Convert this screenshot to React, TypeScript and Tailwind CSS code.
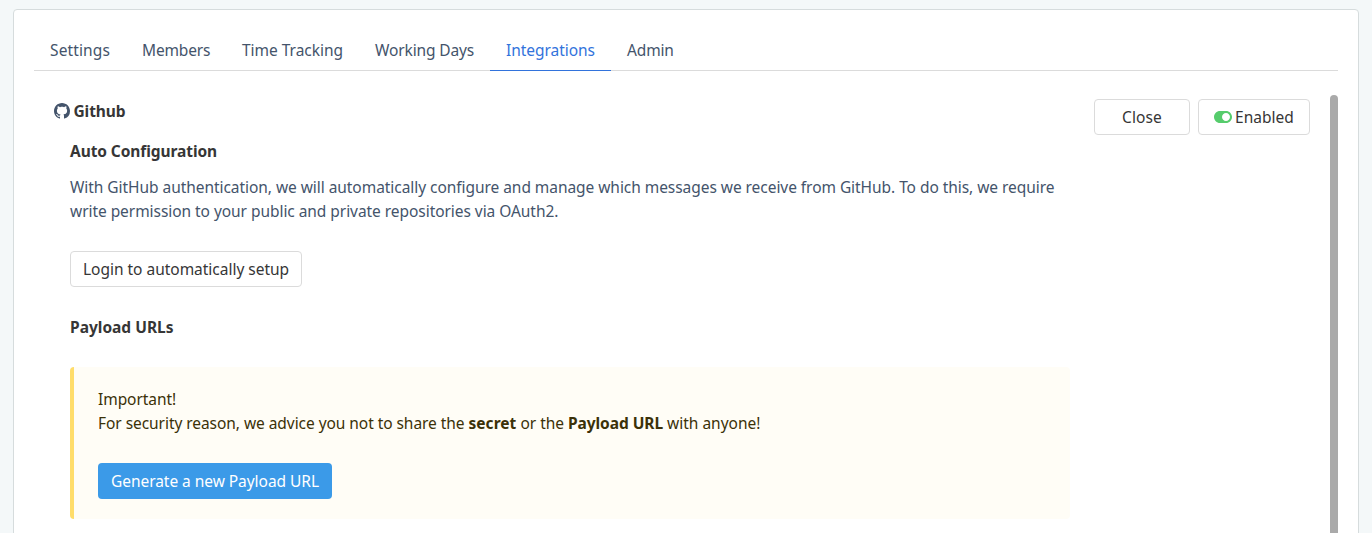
import { FaToggleOn } from "react-icons/fa";

const tabs = [
  { label: "Settings", width: "w-[92px]", tracking: "tracking-[0.12px]" },
  { label: "Members", width: "w-[100px]", tracking: "tracking-[-0.16px]" },
  { label: "Time Tracking", width: "w-[133px]", tracking: "tracking-[-0.02px]" },
  { label: "Working Days", width: "w-[131px]", tracking: "tracking-[-0.13px]" },
  { label: "Integrations", width: "w-[121px]", tracking: "tracking-[-0.04px]", active: true },
  { label: "Admin", width: "w-[79px]", tracking: "tracking-[-0.15px]" },
];

function GithubMark() {
  return (
    <svg className="size-4 shrink-0" viewBox="0 0 16 16" fill="currentColor" aria-hidden="true">
      <path d="M8 0C3.58 0 0 3.58 0 8c0 3.54 2.29 6.53 5.47 7.59.4.07.55-.17.55-.38 0-.19-.01-.82-.01-1.49-2.01.37-2.53-.49-2.69-.94-.09-.23-.48-.94-.82-1.13-.28-.15-.68-.52-.01-.53.63-.01 1.08.58 1.23.82.72 1.21 1.87.87 2.33.66.07-.52.28-.87.51-1.07-1.78-.2-3.64-.89-3.64-3.95 0-.87.31-1.59.82-2.15-.08-.2-.36-1.02.08-2.12 0 0 .67-.21 2.2.82.64-.18 1.32-.27 2-.27s1.36.09 2 .27c1.53-1.04 2.2-.82 2.2-.82.44 1.1.16 1.92.08 2.12.51.56.82 1.27.82 2.15 0 3.07-1.87 3.75-3.65 3.95.29.25.54.73.54 1.48 0 1.07-.01 1.93-.01 2.2 0 .21.15.46.55.38A8.01 8.01 0 0 0 16 8c0-4.42-3.58-8-8-8z" />
    </svg>
  );
}

function Tabs() {
  return (
    <nav className="flex border-b border-[#dbdbdb]">
      {tabs.map((tab) => (
        <a
          key={tab.label}
          className={`-mb-px shrink-0 border-b px-4 py-2 whitespace-nowrap ${tab.width} ${tab.tracking} ${
            tab.active ? "border-[#3273dc] text-[#3273dc]" : "border-transparent"
          }`}
        >
          {tab.label}
        </a>
      ))}
    </nav>
  );
}

function GithubSettings() {
  return (
    <section className="w-[1016px]">
      <h2 className="flex items-center gap-[3.5px]">
        <GithubMark />
        <strong className="tracking-[-0.1px] text-[#363636]">Github</strong>
      </h2>
      <div className="pt-4 pl-4">
        <h3 className="font-bold tracking-[-0.08px] text-[#363636]">Auto Configuration</h3>
        <p className="mt-3 tracking-[-0.052px] whitespace-nowrap">
          With GitHub authentication, we will automatically configure and manage which messages we receive from GitHub. To do this, we require
          <br />
          write permission to your public and private repositories via OAuth2.
        </p>
        <button className="mt-7 flex h-9 w-[232px] items-center rounded border border-[#dbdbdb] bg-white px-3 tracking-[-0.02px] whitespace-nowrap text-[#363636]">
          Login to automatically setup
        </button>
        <h3 className="mt-7 font-bold text-[#363636]">Payload URLs</h3>
        <div className="mt-7 rounded border-l-4 border-[#ffdd6b] bg-[#fffdf6] px-6 py-5 text-[#3b3108]">
          <p className="tracking-[-0.06px]">Important!</p>
          <p className="whitespace-pre">
            <span className="tracking-[-0.055px]">For security reason, we advice you not to share the </span>
            <strong className="tracking-[0.05px]">secret</strong>
            <span className="tracking-[-0.03px]"> or the </span>
            <strong className="tracking-[-0.06px]">Payload URL</strong>
            <span className="tracking-[-0.01px]"> with anyone!</span>
          </p>
          <button className="mt-7 flex h-9 w-[234px] items-center rounded bg-[#3b9ae8] px-[13px] tracking-[-0.045px] whitespace-nowrap text-white">
            Generate a new Payload URL
          </button>
        </div>
      </div>
    </section>
  );
}

export default function App() {
  return (
    <div className="h-screen overflow-hidden bg-[#f4f8f9] px-[13px] pt-[9px] font-['Noto_Sans','Open_Sans',sans-serif] text-[15.5px] leading-6 text-[#44546b]">
      <main className="flex h-[600px] flex-col rounded border border-[#d6dcdd] bg-white p-5">
        <Tabs />
        <div className="mt-6 flex flex-1">
          <div className="flex flex-1 items-start justify-between px-5 pt-1">
            <GithubSettings />
            <div className="flex gap-2 text-[#363636]">
              <button className="flex h-9 w-24 items-center justify-center rounded border border-[#dbdbdb] bg-white tracking-[0.1px]">
                Close
              </button>
              <button className="flex h-9 w-28 items-center rounded border border-[#dbdbdb] bg-white pl-[15px] tracking-[0.02px]">
                <FaToggleOn className="mr-[3px] h-4 w-[18px] text-[#56cc6c]" />
                Enabled
              </button>
            </div>
          </div>
          <div className="w-2 rounded-full bg-[#aaaaaa]" />
        </div>
      </main>
    </div>
  );
}
